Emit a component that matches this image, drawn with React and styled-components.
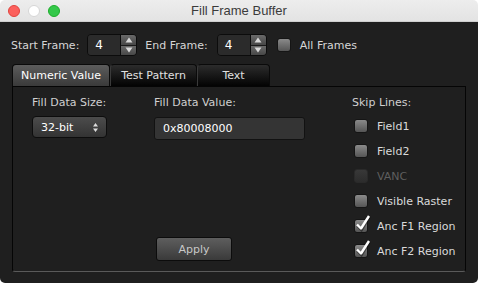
import React from "react";
import styled, { createGlobalStyle } from "styled-components";

const Global = createGlobalStyle`
  html, body { margin: 0; padding: 0; background: #ffffff; }
  body { font-family: "DejaVu Sans", Verdana, sans-serif; }
`;

const Window = styled.div`
  width: 478px;
  height: 283px;
  border-radius: 5px;
  overflow: hidden;
  display: flex;
  flex-direction: column;
`;

const TitleBar = styled.div`
  height: 22px;
  flex: none;
  position: relative;
  display: flex;
  align-items: center;
  padding-left: 8px;
  gap: 8px;
  background: linear-gradient(#ededed, #e3e3e3);
  box-sizing: border-box;
  border-bottom: 1px solid #cfcfcf;
`;

const Light = styled.span`
  width: 12px;
  height: 12px;
  border-radius: 50%;
  box-sizing: border-box;
  background: ${(p) => p.$c};
  border: 1px solid ${(p) => p.$b};
`;

const Title = styled.div`
  position: absolute;
  left: 0;
  right: 0;
  top: 0;
  height: 21px;
  line-height: 22px;
  text-align: center;
  font-family: "Liberation Sans", Arial, sans-serif;
  font-size: 13px;
  color: #3b3b3b;
  pointer-events: none;
`;

const Body = styled.div`
  flex: 1;
  background: #1f1f1f;
  padding: 12px 12px 12px 11px;
  display: flex;
  flex-direction: column;
  color: #dadada;
  font-size: 11px;
`;

const TopRow = styled.div`
  height: 22px;
  display: flex;
  align-items: center;
`;

const Label = styled.span`
  color: #d6d6d6;
  margin-right: ${(p) => p.$mr || 0}px;
  margin-left: ${(p) => p.$ml || 0}px;
  white-space: nowrap;
`;

const Spin = styled.div`
  display: flex;
  height: 22px;
  width: 50px;
  box-sizing: border-box;
  border: 1px solid #0c0c0c;
  border-radius: 4px;
  overflow: hidden;
`;

const SpinField = styled.div`
  width: 33px;
  background: #2b2b2b;
  color: #ffffff;
  font-size: 12px;
  display: flex;
  align-items: center;
  padding-left: 7px;
  box-sizing: border-box;
  border-right: 1px solid #0c0c0c;
`;

const SpinSteps = styled.div`
  flex: 1;
  display: flex;
  flex-direction: column;
`;

const Step = styled.div`
  flex: 1;
  display: flex;
  align-items: center;
  justify-content: center;
  background: linear-gradient(#6a6a6a, #474747);
  & + & { border-top: 1px solid #1a1a1a; }
`;

const Tri = ({ up }) => (
  <svg width="8" height="6" viewBox="0 0 8 6">
    <path d={up ? "M4 0.5 L7.5 5.5 L0.5 5.5 Z" : "M0.5 0.5 L7.5 0.5 L4 5.5 Z"} fill="#d8d8d8" />
  </svg>
);

const Box = styled.span`
  position: relative;
  width: 14px;
  height: 14px;
  flex: none;
  box-sizing: border-box;
  border-radius: 3px;
  border: 1px solid ${(p) => (p.$disabled ? "#2a2a2a" : "#151515")};
  background: ${(p) =>
    p.$disabled ? "linear-gradient(#383838, #2c2c2c)" : "linear-gradient(#8a8a8a, #555555)"};
`;

const Check = styled.svg`
  position: absolute;
  left: 0px;
  top: -5px;
`;

const CheckBox = ({ checked, disabled }) => (
  <Box $disabled={disabled}>
    {checked && (
      <Check width="16" height="17" viewBox="0 0 16 17">
        <path d="M2 10 L6 14 L14 1" fill="none" stroke="#111" strokeWidth="3" strokeOpacity="0.5" transform="translate(0.5,0.8)" />
        <path d="M2 9.5 L6 13.5 L14 1" fill="none" stroke="#ffffff" strokeWidth="2.4" strokeLinejoin="round" />
      </Check>
    )}
  </Box>
);

const Tabs = styled.div`
  margin-top: 8px;
  margin-left: 1px;
  display: flex;
  height: 22px;
`;

const Tab = styled.div`
  width: ${(p) => p.$w}px;
  box-sizing: border-box;
  display: flex;
  align-items: center;
  justify-content: center;
  border-radius: 4px 4px 0 0;
  border: 1px solid #0a0a0a;
  border-bottom: none;
  border-left: 1px solid ${(p) => (p.$first ? "#0a0a0a" : "#3a3a3a")};
  background: ${(p) =>
    p.$active ? "linear-gradient(#5c5c5c, #3a3a3a)" : "linear-gradient(#2c2c2c, #030303)"};
  color: ${(p) => (p.$active ? "#ffffff" : "#e0e0e0")};
  font-size: 11px;
`;

const Panel = styled.div`
  margin-left: 1px;
  width: 454px;
  flex: 1;
  box-sizing: border-box;
  border-top: 1px solid #050505;
  border-left: 1px solid #050505;
  border-right: 1px solid #050505;
  border-bottom: 1px solid #5a5a5a;
  border-radius: 0 0 3px 3px;
  padding: 9px 0 10px 18px;
  display: grid;
  grid-template-columns: 123px 198px 1fr;
`;

const Col = styled.div`
  display: flex;
  flex-direction: column;
`;

const ColLabel = styled.div`
  height: 14px;
  line-height: 14px;
  color: #d0d0d0;
  margin-left: ${(p) => p.$ml || 0}px;
`;

const Popup = styled.div`
  margin-top: 6px;
  margin-left: 1px;
  width: 75px;
  height: 22px;
  box-sizing: border-box;
  border: 1px solid #0d0d0d;
  border-radius: 4px;
  background: linear-gradient(#4c4c4c, #333333);
  display: flex;
  align-items: center;
  justify-content: space-between;
  padding: 0 8px 0 8px;
  color: #ffffff;
  font-size: 11px;
`;

const Field = styled.div`
  margin-top: 7px;
  width: 151px;
  height: 23px;
  box-sizing: border-box;
  border: 1px solid #121212;
  border-radius: 3px;
  background: #343434;
  color: #ffffff;
  display: flex;
  align-items: center;
  padding-left: 8px;
  font-size: 11px;
`;

const Apply = styled.div`
  margin-top: auto;
  margin-left: 2px;
  width: 76px;
  height: 24px;
  box-sizing: border-box;
  border: 1px solid #0c0c0c;
  border-radius: 3px;
  background: linear-gradient(#5e5e5e, #3a3a3a);
  color: #c8c8c8;
  display: flex;
  align-items: center;
  justify-content: center;
  font-size: 11px;
`;

const List = styled.div`
  margin-top: 6px;
  display: flex;
  flex-direction: column;
  gap: 5px;
`;

const Row = styled.div`
  height: 20px;
  display: flex;
  align-items: center;
  padding-left: 2px;
  gap: 9px;
  color: ${(p) => (p.$disabled ? "#5e5e5e" : "#dadada")};
`;

const items = [
  { t: "Field1" },
  { t: "Field2" },
  { t: "VANC", d: true },
  { t: "Visible Raster" },
  { t: "Anc F1 Region", c: true },
  { t: "Anc F2 Region", c: true },
];

export default function App() {
  return (
    <>
      <Global />
      <Window>
        <TitleBar>
          <Light $c="#fc615d" $b="#e0443e" />
          <Light $c="#ffffff" $b="#d6d6d6" />
          <Light $c="#34c84a" $b="#1dad2b" />
          <Title>Fill Frame Buffer</Title>
        </TitleBar>
        <Body>
          <TopRow>
            <Label $mr={8}>Start Frame:</Label>
            <Spin>
              <SpinField>4</SpinField>
              <SpinSteps>
                <Step><Tri up /></Step>
                <Step><Tri /></Step>
              </SpinSteps>
            </Spin>
            <Label $ml={8} $mr={9}>End Frame:</Label>
            <Spin>
              <SpinField>4</SpinField>
              <SpinSteps>
                <Step><Tri up /></Step>
                <Step><Tri /></Step>
              </SpinSteps>
            </Spin>
            <span style={{ width: 10 }} />
            <CheckBox />
            <Label $ml={9}>All Frames</Label>
          </TopRow>
          <Tabs>
            <Tab $w={98} $active $first>Numeric Value</Tab>
            <Tab $w={87}>Test Pattern</Tab>
            <Tab $w={73}>Text</Tab>
          </Tabs>
          <Panel>
            <Col>
              <ColLabel $ml={1}>Fill Data Size:</ColLabel>
              <Popup>
                <span>32-bit</span>
                <svg width="5" height="9" viewBox="0 0 5 9">
                  <path d="M2.5 0 L5 3.5 L0 3.5 Z M2.5 9 L5 5.5 L0 5.5 Z" fill="#dcdcdc" />
                </svg>
              </Popup>
            </Col>
            <Col>
              <ColLabel>Fill Data Value:</ColLabel>
              <Field>0x80008000</Field>
              <Apply>Apply</Apply>
            </Col>
            <Col>
              <ColLabel>Skip Lines:</ColLabel>
              <List>
                {items.map((it) => (
                  <Row key={it.t} $disabled={it.d}>
                    <CheckBox checked={it.c} disabled={it.d} />
                    <span>{it.t}</span>
                  </Row>
                ))}
              </List>
            </Col>
          </Panel>
        </Body>
      </Window>
    </>
  );
}
